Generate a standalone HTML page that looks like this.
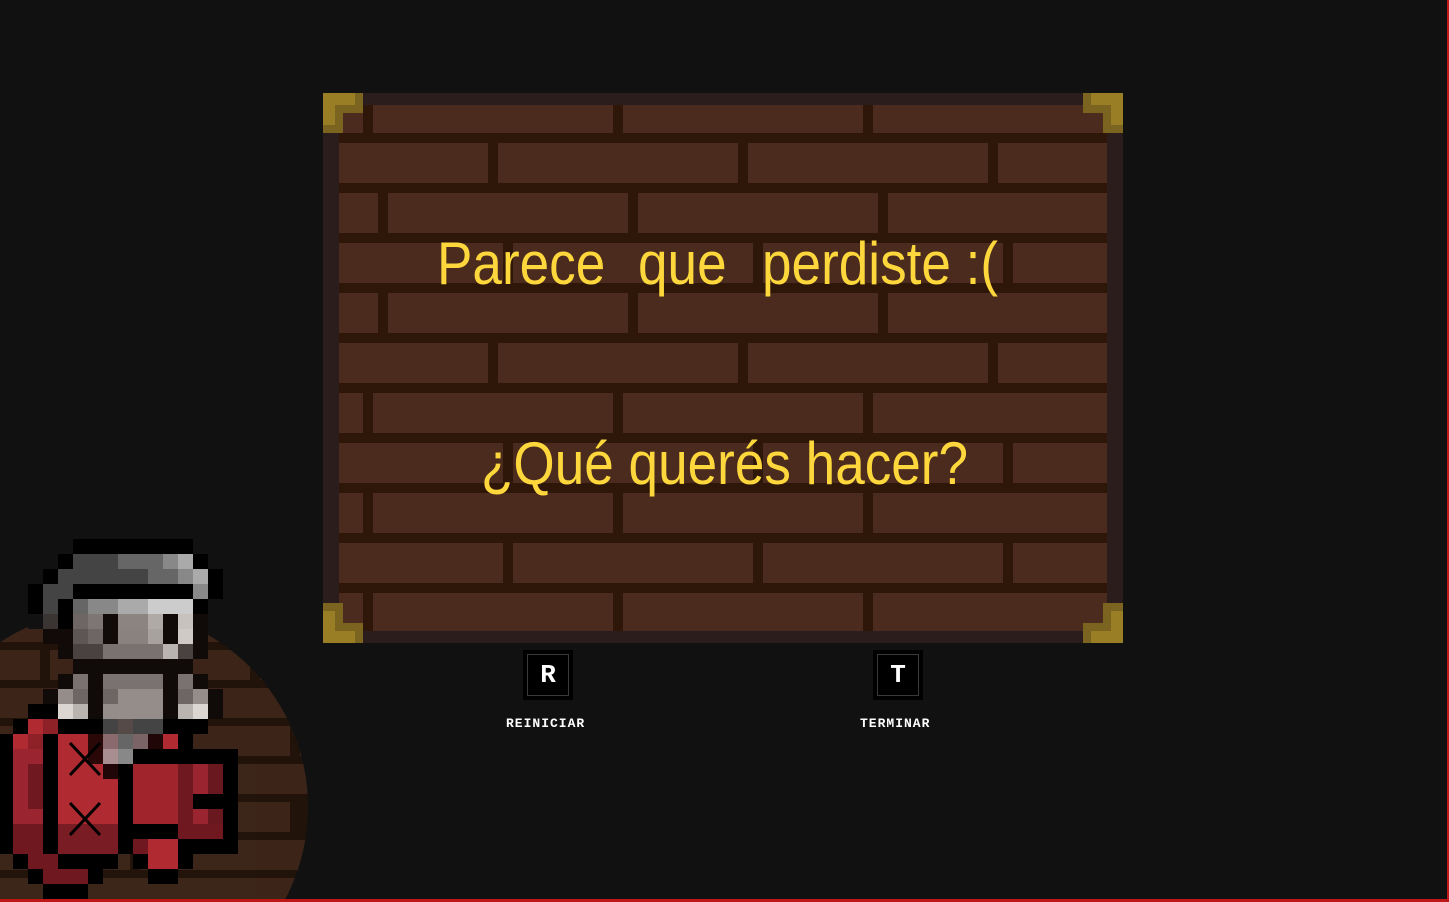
<!DOCTYPE html>
<html><head><meta charset="utf-8"><style>
html,body{margin:0;padding:0;background:#111111;width:1449px;height:902px;overflow:hidden;position:relative;font-family:"Liberation Sans",sans-serif}
.panel{position:absolute;left:323px;top:93px;width:800px;height:550px;background:#2b1d1c}
.bricks{position:absolute;left:16px;top:12px;width:768px;height:526px;background:#2e1608;overflow:hidden}
.row{position:absolute;left:0;width:768px;height:40px;background-image:linear-gradient(90deg,#2e1608 0 10px,#4a2b1e 10px 250px);background-size:250px 40px;background-repeat:repeat-x}
.corner{position:absolute;width:40px;height:40px}
.txt{position:absolute;color:#fdd73c;font-size:60px;line-height:60px;white-space:nowrap;transform:scaleX(0.885);transform-origin:0 0}
.key{position:absolute;top:650px;width:50px;height:50px;background:#000;box-sizing:border-box}
.key .in{position:absolute;left:4px;top:4px;width:40px;height:40px;border:1px solid #3a3a3a;color:#fff;font:bold 26px/40px "Liberation Mono",monospace;text-align:center}
.lbl{position:absolute;top:716px;color:#fff;font:bold 13px/16px "Liberation Mono",monospace;letter-spacing:1px}
</style></head><body>
<div class="panel">
 <div class="bricks">
  <div class="row" style="top:-12px;background-position:24px 0"></div>
  <div class="row" style="top:38px;background-position:149px 0"></div>
  <div class="row" style="top:88px;background-position:39px 0"></div>
  <div class="row" style="top:138px;background-position:164px 0"></div>
  <div class="row" style="top:188px;background-position:39px 0"></div>
  <div class="row" style="top:238px;background-position:149px 0"></div>
  <div class="row" style="top:288px;background-position:24px 0"></div>
  <div class="row" style="top:338px;background-position:164px 0"></div>
  <div class="row" style="top:388px;background-position:24px 0"></div>
  <div class="row" style="top:438px;background-position:164px 0"></div>
  <div class="row" style="top:488px;background-position:24px 0"></div>
 </div>
 <svg class="corner" style="left:0;top:0" viewBox="0 0 40 40"><path d="M0 0H40V20H20V40H0Z" fill="#7a6420"/><path d="M0 0H32V12H12V32H0Z" fill="#9a7e26"/></svg>
 <svg class="corner" style="right:0;top:0" viewBox="0 0 40 40"><path d="M40 0H0V20H20V40H40Z" fill="#7a6420"/><path d="M40 0H8V12H28V32H40Z" fill="#9a7e26"/></svg>
 <svg class="corner" style="left:0;bottom:0" viewBox="0 0 40 40"><path d="M0 40H40V20H20V0H0Z" fill="#7a6420"/><path d="M0 40H32V28H12V8H0Z" fill="#9a7e26"/></svg>
 <svg class="corner" style="right:0;bottom:0" viewBox="0 0 40 40"><path d="M40 40H0V20H20V0H40Z" fill="#7a6420"/><path d="M40 40H8V28H28V8H40Z" fill="#9a7e26"/></svg>
</div>
<div class="txt" style="left:437px;top:234px">Parece</div>
<div class="txt" style="left:638px;top:234px">que</div>
<div class="txt" style="left:762px;top:234px">perdiste :(</div>
<div class="txt" style="left:481px;top:434px">¿Qué querés hacer?</div>

<div class="key" style="left:523px"><div class="in">R</div></div>
<div class="key" style="left:873px"><div class="in">T</div></div>
<div class="lbl" style="left:506px">REINICIAR</div>
<div class="lbl" style="left:860px">TERMINAR</div>

<svg style="position:absolute;left:0;top:0" width="1449" height="902">
 <defs><clipPath id="cc"><circle cx="110" cy="807" r="198"/></clipPath></defs>
 <g clip-path="url(#cc)" opacity="0.6">
  <rect x="0" y="600" width="320" height="302" fill="#2e1608"/>
  <g fill="#5a341f">
   <rect x="0" y="612" width="90" height="30"/><rect x="100" y="612" width="220" height="30"/>
   <rect x="0" y="650" width="40" height="30"/><rect x="50" y="650" width="200" height="30"/><rect x="260" y="650" width="60" height="30"/>
   <rect x="0" y="688" width="120" height="30"/><rect x="130" y="688" width="190" height="30"/>
   <rect x="0" y="726" width="60" height="30"/><rect x="70" y="726" width="220" height="30"/><rect x="300" y="726" width="20" height="30"/>
   <rect x="0" y="764" width="150" height="30"/><rect x="160" y="764" width="160" height="30"/>
   <rect x="0" y="802" width="80" height="30"/><rect x="90" y="802" width="200" height="30"/>
   <rect x="0" y="840" width="130" height="30"/><rect x="140" y="840" width="180" height="30"/>
   <rect x="0" y="878" width="60" height="30"/><rect x="70" y="878" width="250" height="30"/>
  </g>
 </g>
 <g shape-rendering="crispEdges">
  <rect x="73" y="539" width="120" height="15" fill="#000"/>
  <rect x="58" y="554" width="15" height="15" fill="#000"/><rect x="73" y="554" width="45" height="15" fill="#444"/><rect x="118" y="554" width="45" height="15" fill="#666"/><rect x="163" y="554" width="15" height="15" fill="#888"/><rect x="178" y="554" width="15" height="15" fill="#aaa"/><rect x="193" y="554" width="15" height="15" fill="#000"/>
  <rect x="43" y="569" width="15" height="15" fill="#000"/><rect x="58" y="569" width="90" height="15" fill="#444"/><rect x="148" y="569" width="30" height="15" fill="#666"/><rect x="178" y="569" width="15" height="15" fill="#888"/><rect x="193" y="569" width="15" height="15" fill="#aaa"/><rect x="208" y="569" width="15" height="15" fill="#000"/>
  <rect x="28" y="584" width="15" height="15" fill="#000"/><rect x="43" y="584" width="30" height="15" fill="#444"/><rect x="73" y="584" width="120" height="15" fill="#000"/><rect x="193" y="584" width="15" height="15" fill="#888"/><rect x="208" y="584" width="15" height="15" fill="#000"/>
  <rect x="28" y="599" width="15" height="15" fill="#000"/><rect x="43" y="599" width="15" height="15" fill="#444"/><rect x="58" y="599" width="15" height="15" fill="#000"/><rect x="73" y="599" width="15" height="15" fill="#666"/><rect x="88" y="599" width="30" height="15" fill="#888"/><rect x="118" y="599" width="30" height="15" fill="#aaa"/><rect x="148" y="599" width="45" height="15" fill="#ccc"/><rect x="193" y="599" width="15" height="15" fill="#000"/>
  <rect x="28" y="614" width="15" height="15" fill="#111"/><rect x="43" y="614" width="15" height="15" fill="#3a3432"/><rect x="58" y="614" width="15" height="15" fill="#000"/><rect x="73" y="614" width="15" height="15" fill="#6e6664"/><rect x="88" y="614" width="15" height="15" fill="#7e7674"/><rect x="103" y="614" width="15" height="15" fill="#100a08"/><rect x="118" y="614" width="30" height="15" fill="#8c8480"/><rect x="148" y="614" width="15" height="15" fill="#b0aaa6"/><rect x="163" y="614" width="15" height="15" fill="#100a08"/><rect x="178" y="614" width="15" height="15" fill="#c8c2be"/><rect x="193" y="614" width="15" height="15" fill="#100a08"/>
  <rect x="43" y="629" width="30" height="15" fill="#120a08"/><rect x="73" y="629" width="15" height="15" fill="#5e5654"/><rect x="88" y="629" width="15" height="15" fill="#6e6664"/><rect x="103" y="629" width="15" height="15" fill="#100a08"/><rect x="118" y="629" width="30" height="15" fill="#8a827e"/><rect x="148" y="629" width="15" height="15" fill="#a8a29e"/><rect x="163" y="629" width="15" height="15" fill="#100a08"/><rect x="178" y="629" width="15" height="15" fill="#d0cac6"/><rect x="193" y="629" width="15" height="15" fill="#100a08"/>
  <rect x="58" y="644" width="15" height="15" fill="#100a08"/><rect x="73" y="644" width="30" height="15" fill="#4a4240"/><rect x="103" y="644" width="60" height="15" fill="#7a7270"/><rect x="163" y="644" width="15" height="15" fill="#bab4b0"/><rect x="178" y="644" width="15" height="15" fill="#4a4240"/><rect x="193" y="644" width="15" height="15" fill="#100a08"/>
  <rect x="73" y="659" width="120" height="15" fill="#100a08"/>
  <rect x="58" y="674" width="15" height="15" fill="#100a08"/><rect x="73" y="674" width="15" height="15" fill="#7a7270"/><rect x="88" y="674" width="15" height="15" fill="#100a08"/><rect x="103" y="674" width="60" height="15" fill="#7a7270"/><rect x="163" y="674" width="15" height="15" fill="#100a08"/><rect x="178" y="674" width="15" height="15" fill="#7a7270"/><rect x="193" y="674" width="15" height="15" fill="#100a08"/>
  <rect x="43" y="689" width="15" height="15" fill="#100a08"/><rect x="58" y="689" width="15" height="15" fill="#958d8a"/><rect x="73" y="689" width="15" height="15" fill="#6e6664"/><rect x="88" y="689" width="15" height="15" fill="#100a08"/><rect x="103" y="689" width="15" height="15" fill="#6e6664"/><rect x="118" y="689" width="45" height="15" fill="#958d8a"/><rect x="163" y="689" width="15" height="15" fill="#100a08"/><rect x="178" y="689" width="15" height="15" fill="#6e6664"/><rect x="193" y="689" width="15" height="15" fill="#958d8a"/><rect x="208" y="689" width="15" height="15" fill="#100a08"/>
  <rect x="28" y="704" width="30" height="15" fill="#000"/><rect x="58" y="704" width="15" height="15" fill="#dcd6d2"/><rect x="73" y="704" width="15" height="15" fill="#bab4b0"/><rect x="88" y="704" width="15" height="15" fill="#100a08"/><rect x="103" y="704" width="60" height="15" fill="#958d8a"/><rect x="163" y="704" width="15" height="15" fill="#100a08"/><rect x="178" y="704" width="15" height="15" fill="#bab4b0"/><rect x="193" y="704" width="15" height="15" fill="#dcd6d2"/><rect x="208" y="704" width="15" height="15" fill="#100a08"/>
  <rect x="13" y="719" width="15" height="15" fill="#000"/><rect x="28" y="719" width="15" height="15" fill="#b02a32"/><rect x="43" y="719" width="15" height="15" fill="#8e2028"/><rect x="58" y="719" width="45" height="15" fill="#000"/><rect x="103" y="719" width="15" height="15" fill="#444"/><rect x="118" y="719" width="15" height="15" fill="#554a48"/><rect x="133" y="719" width="30" height="15" fill="#444"/><rect x="163" y="719" width="45" height="15" fill="#000"/>
  <rect x="0" y="734" width="13" height="15" fill="#000"/><rect x="13" y="734" width="15" height="15" fill="#b02a32"/><rect x="28" y="734" width="15" height="15" fill="#8e2028"/><rect x="43" y="734" width="15" height="15" fill="#000"/><rect x="58" y="734" width="30" height="15" fill="#b02a32"/><rect x="88" y="734" width="15" height="15" fill="#2a0808"/><rect x="103" y="734" width="15" height="15" fill="#8a6a6c"/><rect x="118" y="734" width="15" height="15" fill="#666"/><rect x="133" y="734" width="15" height="15" fill="#7a6466"/><rect x="148" y="734" width="15" height="15" fill="#200606"/><rect x="163" y="734" width="15" height="15" fill="#b02a32"/><rect x="178" y="734" width="15" height="15" fill="#000"/>
  <rect x="0" y="749" width="13" height="75" fill="#000"/><rect x="13" y="749" width="30" height="75" fill="#9a2430"/><rect x="28" y="764" width="15" height="45" fill="#701820"/><rect x="43" y="749" width="15" height="105" fill="#000"/>
  <rect x="58" y="749" width="45" height="75" fill="#b02a32"/><rect x="88" y="749" width="15" height="15" fill="#2a0808"/><rect x="103" y="749" width="15" height="15" fill="#a88e90"/><rect x="118" y="749" width="15" height="15" fill="#888"/><rect x="133" y="749" width="105" height="15" fill="#000"/>
  <rect x="103" y="764" width="15" height="15" fill="#200606"/><rect x="103" y="779" width="15" height="60" fill="#b02a32"/><rect x="118" y="764" width="15" height="90" fill="#000"/>
  <rect x="133" y="764" width="45" height="60" fill="#a0242c"/><rect x="178" y="764" width="15" height="75" fill="#701820"/><rect x="193" y="764" width="15" height="60" fill="#9a2430"/><rect x="208" y="764" width="15" height="60" fill="#6a1820"/><rect x="223" y="764" width="15" height="90" fill="#000"/>
  <rect x="193" y="794" width="30" height="15" fill="#000"/>
  <rect x="13" y="824" width="30" height="30" fill="#701820"/><rect x="0" y="824" width="13" height="30" fill="#000"/>
  <rect x="58" y="824" width="60" height="30" fill="#7a1c24"/><rect x="133" y="824" width="45" height="15" fill="#000"/><rect x="193" y="824" width="30" height="15" fill="#701820"/>
  <rect x="133" y="839" width="15" height="15" fill="#701820"/><rect x="148" y="839" width="30" height="30" fill="#b02a32"/><rect x="178" y="839" width="45" height="15" fill="#000"/>
  <rect x="13" y="854" width="15" height="15" fill="#000"/><rect x="28" y="854" width="30" height="15" fill="#701820"/><rect x="58" y="854" width="60" height="15" fill="#000"/><rect x="133" y="854" width="15" height="15" fill="#000"/><rect x="178" y="854" width="15" height="15" fill="#000"/>
  <rect x="28" y="869" width="15" height="15" fill="#000"/><rect x="43" y="869" width="45" height="15" fill="#701820"/><rect x="88" y="869" width="15" height="15" fill="#000"/><rect x="148" y="869" width="30" height="15" fill="#000"/>
  <rect x="43" y="884" width="45" height="18" fill="#000"/>
 </g>
 <g stroke="#000" stroke-width="3">
  <path d="M70 743L100 775M100 743L70 775"/>
  <path d="M70 803L100 835M100 803L70 835"/>
 </g>
 <rect x="0" y="899" width="1449" height="3" fill="#c01818"/>
 <rect x="1447" y="0" width="2" height="902" fill="#c01818"/>
</svg>
</body></html>
